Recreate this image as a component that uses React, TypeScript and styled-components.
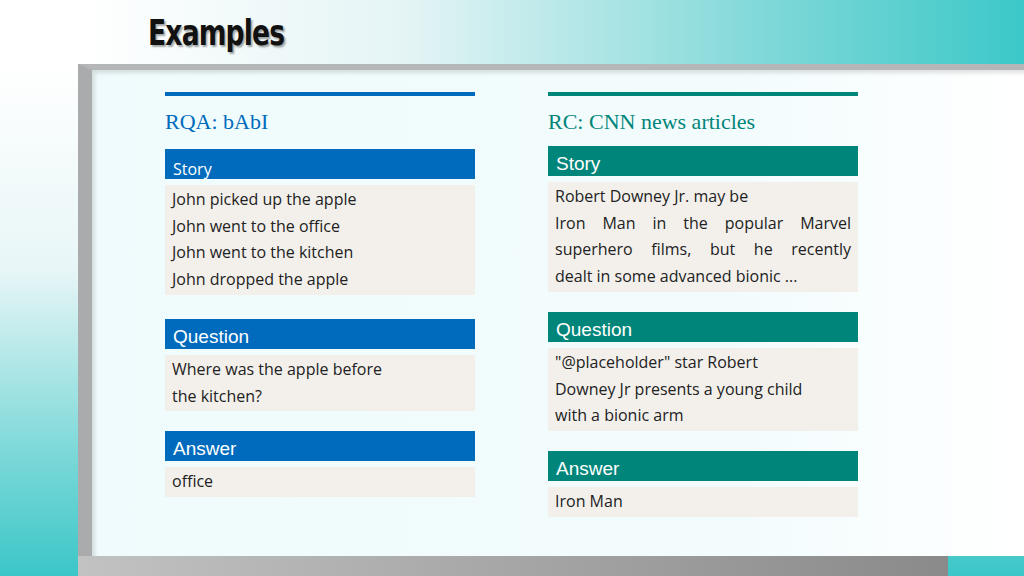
import React from "react";
import styled, { createGlobalStyle } from "styled-components";

const Global = createGlobalStyle`
  html, body { margin: 0; padding: 0; }
  body { width: 1024px; height: 576px; overflow: hidden; font-family: "Open Sans", sans-serif; }
`;

const Page = styled.div`
  width: 1024px; height: 576px; display: flex; flex-direction: column;
  background: linear-gradient(90deg, #ffffff 0%, #ffffff 8%, #e4f4f5 40%, #7fd8d8 75%, #3cc8c8 100%);
`;
const Header = styled.div`
  height: 64px; display: flex; align-items: center; padding-left: 148px; box-sizing: border-box;
`;
const Title = styled.h1`
  margin: 0; font-family: "DejaVu Sans Condensed", "DejaVu Sans", sans-serif; font-weight: bold;
  font-size: 36px; letter-spacing: -1px; color: #111; transform: scaleX(0.82); transform-origin: left;
  text-shadow: 2px 2px 2px rgba(0,0,0,0.35);
`;
const Body = styled.div`
  flex: 1; display: flex;
  background: linear-gradient(180deg, #ffffff 0%, #e8f6f7 40%, #7fd9d9 75%, #3cc6c8 100%);
`;
const Frame = styled.div`
  margin-left: 78px; flex: 1; display: flex; flex-direction: column;
`;
const Panel = styled.div`
  flex: 1; display: flex;
  border-top: 6px solid #b4b6b8; border-left: 14px solid #a9abad;
  background: linear-gradient(90deg, #effbfc 0%, #f3fcfd 70%, #ffffff 100%);
  box-shadow: inset 3px 3px 4px rgba(0,0,0,0.12);
  padding: 22px 0 0 73px; gap: 73px;
`;
const BottomBar = styled.div`
  height: 20px; width: 870px; background: linear-gradient(90deg, #c2c2c2, #8a8a8a);
`;
const Column = styled.div<{ $c: string }>`
  width: 310px; display: flex; flex-direction: column;
  border-top: 4px solid ${p => p.$c};
`;
const ColTitle = styled.div<{ $c: string; $mb: number }>`
  font-family: "Liberation Serif", serif; font-size: 22px; color: ${p => p.$c};
  margin-top: 13px; height: 28px; margin-bottom: ${p => p.$mb}px;
`;
const SecHead = styled.div<{ $c: string; $fs: number; $font: string }>`
  height: 30px; background: ${p => p.$c}; color: #fff; padding: 0 8px;
  display: flex; align-items: flex-end; font-size: ${p => p.$fs}px; font-family: ${p => p.$font};
  line-height: 1.15; box-sizing: border-box; padding-bottom: 1px;
`;
const SecBody = styled.div<{ $justify?: boolean }>`
  margin-top: 6px; background: #f3f0ec; padding: 1px 7px 2px; font-size: 16px; line-height: 26.7px;
  color: #222; text-align: ${p => (p.$justify ? "justify" : "left")};
`;
const Line = styled.div<{ $justify?: boolean }>`
  text-align: ${p => (p.$justify ? "justify" : "left")};
  text-align-last: ${p => (p.$justify ? "justify" : "auto")};
`;
const Section = styled.div<{ $gap: number }>`
  margin-bottom: ${p => p.$gap}px;
`;

const blue = "#006bbd";
const teal = "#00857a";

export default function App() {
  return (
    <>
      <Global />
      <Page>
        <Header><Title>Examples</Title></Header>
        <Body>
          <Frame>
            <Panel>
              <Column $c={blue}>
                <ColTitle $c={blue} $mb={12}>RQA: bAbI</ColTitle>
                <Section $gap={24}>
                  <SecHead $c={blue} $fs={16} $font={'"Open Sans", sans-serif'}>Story</SecHead>
                  <SecBody>
                    <div>John picked up the apple</div>
                    <div>John went to the office</div>
                    <div>John went to the kitchen</div>
                    <div>John dropped the apple</div>
                  </SecBody>
                </Section>
                <Section $gap={20}>
                  <SecHead $c={blue} $fs={19} $font={'"Liberation Sans", Arial, sans-serif'}>Question</SecHead>
                  <SecBody>
                    <div>Where was the apple before</div>
                    <div>the kitchen?</div>
                  </SecBody>
                </Section>
                <Section $gap={0}>
                  <SecHead $c={blue} $fs={19} $font={'"Liberation Sans", Arial, sans-serif'}>Answer</SecHead>
                  <SecBody><div>office</div></SecBody>
                </Section>
              </Column>
              <Column $c={teal}>
                <ColTitle $c={teal} $mb={9}>RC: CNN news articles</ColTitle>
                <Section $gap={20}>
                  <SecHead $c={teal} $fs={19} $font={'"Liberation Sans", Arial, sans-serif'}>Story</SecHead>
                  <SecBody>
                    <div>Robert Downey Jr. may be</div>
                    <Line $justify>Iron Man in the popular Marvel</Line>
                    <Line $justify>superhero films, but he recently</Line>
                    <div>dealt in some advanced bionic ...</div>
                  </SecBody>
                </Section>
                <Section $gap={20}>
                  <SecHead $c={teal} $fs={19} $font={'"Liberation Sans", Arial, sans-serif'}>Question</SecHead>
                  <SecBody>
                    <div>"@placeholder" star Robert</div>
                    <div>Downey Jr presents a young child</div>
                    <div>with a bionic arm</div>
                  </SecBody>
                </Section>
                <Section $gap={0}>
                  <SecHead $c={teal} $fs={19} $font={'"Liberation Sans", Arial, sans-serif'}>Answer</SecHead>
                  <SecBody><div>Iron Man</div></SecBody>
                </Section>
              </Column>
            </Panel>
            <BottomBar />
          </Frame>
        </Body>
      </Page>
    </>
  );
}
